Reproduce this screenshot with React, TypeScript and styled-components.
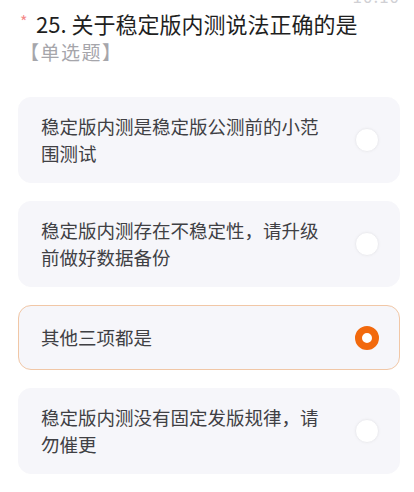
import React, { useState } from 'react';
import styled, { createGlobalStyle } from 'styled-components';

const GlobalStyle = createGlobalStyle`
  html, body {
    margin: 0;
    padding: 0;
    background: #ffffff;
  }
  body {
    font-family: "Noto Sans CJK SC", "Noto Sans", sans-serif;
    -webkit-font-smoothing: antialiased;
  }
`;

const Page = styled.div`
  width: 414px;
  height: 492px;
  overflow: hidden;
  box-sizing: border-box;
  padding: 0 14px 0 18px;
`;

const StatusRow = styled.div`
  display: flex;
  justify-content: flex-end;
  height: 8px;
  overflow: hidden;
`;

const StatusText = styled.span`
  font-size: 17px;
  line-height: 17px;
  color: #d0d0d4;
  margin-top: -13px;
  letter-spacing: 1px;
`;

const QuestionHead = styled.div`
  display: flex;
  align-items: flex-start;
`;

const Required = styled.span`
  width: 18px;
  flex-shrink: 0;
  font-size: 16px;
  line-height: 26px;
  color: #f48a8a;
  padding-left: 2px;
  box-sizing: border-box;
`;

const Title = styled.h2`
  margin: 0;
  font-size: 22px;
  line-height: 30px;
  font-weight: 400;
  color: #1f1f1f;
`;

const TypeTag = styled.div`
  font-size: 19px;
  line-height: 28px;
  letter-spacing: 1.5px;
  color: #a6a6ab;
  margin-left: 2px;
`;

const OptionList = styled.div`
  display: flex;
  flex-direction: column;
  gap: 18px;
  margin-top: 31px;
`;

const OptionCard = styled.div<{ $selected?: boolean }>`
  display: flex;
  align-items: center;
  justify-content: space-between;
  gap: 16px;
  min-height: 65px;
  box-sizing: border-box;
  padding: 15px 20px 15px 22px;
  background: #f6f6fa;
  border: 1px solid ${props => (props.$selected ? '#f1c7a6' : '#f6f6fa')};
  border-radius: 13px;
  cursor: pointer;
`;

const OptionText = styled.span`
  flex: 1;
  max-width: 290px;
  font-size: 18.5px;
  line-height: 27px;
  color: #404044;
`;

const Radio = styled.span<{ $checked?: boolean }>`
  width: 24px;
  height: 24px;
  flex-shrink: 0;
  box-sizing: border-box;
  border-radius: 50%;
  background: #ffffff;
  border: ${props => (props.$checked ? '7px solid #f2690d' : '1px solid #ededf1')};
  box-shadow: ${props => (props.$checked ? 'none' : '0 0 3px rgba(0, 0, 0, 0.04)')};
`;

const options = [
  '稳定版内测是稳定版公测前的小范围测试',
  '稳定版内测存在不稳定性，请升级前做好数据备份',
  '其他三项都是',
  '稳定版内测没有固定发版规律，请勿催更',
];

export default function App() {
  const [selected, setSelected] = useState(2);

  return (
    <>
      <GlobalStyle />
      <Page>
        <StatusRow>
          <StatusText>10:10</StatusText>
        </StatusRow>
        <QuestionHead>
          <Required>*</Required>
          <Title>25. 关于稳定版内测说法正确的是</Title>
        </QuestionHead>
        <TypeTag>【单选题】</TypeTag>
        <OptionList>
          {options.map((text, i) => (
            <OptionCard key={i} $selected={selected === i} onClick={() => setSelected(i)}>
              <OptionText>{text}</OptionText>
              <Radio $checked={selected === i} />
            </OptionCard>
          ))}
        </OptionList>
      </Page>
    </>
  );
}
